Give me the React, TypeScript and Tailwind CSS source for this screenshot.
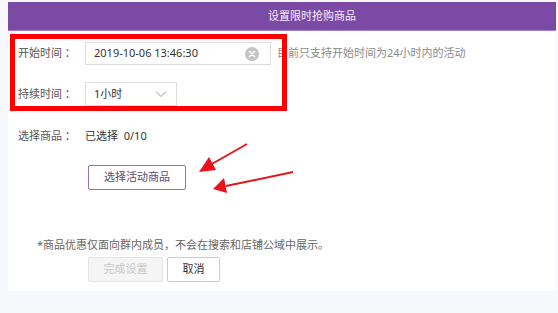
import { ReactNode } from 'react';

const font = { fontFamily: '"Noto Sans", "Noto Sans CJK SC", sans-serif' };

function Row({ label, children, className = '' }: { label: string; children: ReactNode; className?: string }) {
  return (
    <div className={`flex items-center ${className}`}>
      <span className="w-[67px] shrink-0 text-[#555]">{label}</span>
      {children}
    </div>
  );
}

function ClearIcon() {
  return (
    <svg width="14" height="14" viewBox="0 0 14 14" className="shrink-0">
      <circle cx="7" cy="7" r="7" fill="#c4c4c4" />
      <path d="M4.5 4.5 9.5 9.5M9.5 4.5 4.5 9.5" stroke="#fff" strokeWidth="1.6" strokeLinecap="round" />
    </svg>
  );
}

function Chevron() {
  return (
    <svg width="12" height="8" viewBox="0 0 12 8" className="shrink-0">
      <path d="M1 1.5 6 6.5 11 1.5" fill="none" stroke="#9a9a9a" strokeWidth="1" />
    </svg>
  );
}

function Arrows() {
  // red annotation arrows drawn over the form
  return (
    <svg className="pointer-events-none absolute left-0 top-0" width="558" height="313" viewBox="0 0 558 313">
      <g stroke="#e8141b" strokeWidth="2" fill="#e8141b">
        <line x1="247" y1="144" x2="210" y2="165" />
        <polygon points="199,172 209,157 216,170" stroke="none" />
        <line x1="293" y1="172" x2="226" y2="186" />
        <polygon points="213,189 224,178 227,193" stroke="none" />
      </g>
    </svg>
  );
}

export default function App() {
  return (
    <div className="relative h-[313px] w-[558px] overflow-hidden bg-[#f6f8fc] pt-[2px] pl-[8px] text-[11px]" style={font}>
      <div className="w-[548px] bg-white">
        <div className="flex h-[29px] items-center justify-center border-b border-[#a47fcb] bg-[#7a4aa5] pl-[60px] text-[11px] text-[#f3ecfa]">
          设置限时抢购商品
        </div>
        <div className="h-[260px] pl-[10px] pt-[11px]">
          <Row label="开始时间 ：">
            <div className="flex h-[23px] w-[186px] items-center justify-between border border-[#ddd] pl-[8px] pr-[11px] text-[#333]">
              <span>2019-10-06 13:46:30</span>
              <ClearIcon />
            </div>
            <span className="ml-[6px] text-[#8a8a8a]">目前只支持开始时间为24小时内的活动</span>
          </Row>
          <Row label="持续时间 ：" className="mt-[17px]">
            <div className="flex h-[24px] w-[92px] items-center justify-between border border-[#ddd] pl-[8px] pr-[9px] text-[#333]">
              <span>1小时</span>
              <Chevron />
            </div>
          </Row>
          <Row label="选择商品 ：" className="mt-[22px]">
            <span className="text-[#333]">
              已选择&nbsp;&nbsp;0/10
            </span>
          </Row>
          <button className="ml-[70px] mt-[20px] h-[25px] w-[98px] rounded-[2px] border border-[#8f72b9] bg-white text-[11px] text-[#5a4a78]">
            选择活动商品
          </button>
          <p className="ml-[19px] mt-[47px] text-[#666]">*商品优惠仅面向群内成员，不会在搜索和店铺公域中展示。</p>
          <div className="ml-[70px] mt-[4px] flex gap-[4px]">
            <button className="h-[25px] w-[75px] rounded-[2px] border border-[#e4e4e4] bg-[#f5f5f5] text-[11px] text-[#c8c8c8]">
              完成设置
            </button>
            <button className="h-[25px] w-[53px] rounded-[2px] border border-[#ccc] bg-white text-[11px] text-[#333]">
              取消
            </button>
          </div>
        </div>
      </div>
      <div className="absolute left-[10px] top-[34px] h-[77px] w-[277px] border-[5px] border-[#ff0000]" />
      <Arrows />
    </div>
  );
}
